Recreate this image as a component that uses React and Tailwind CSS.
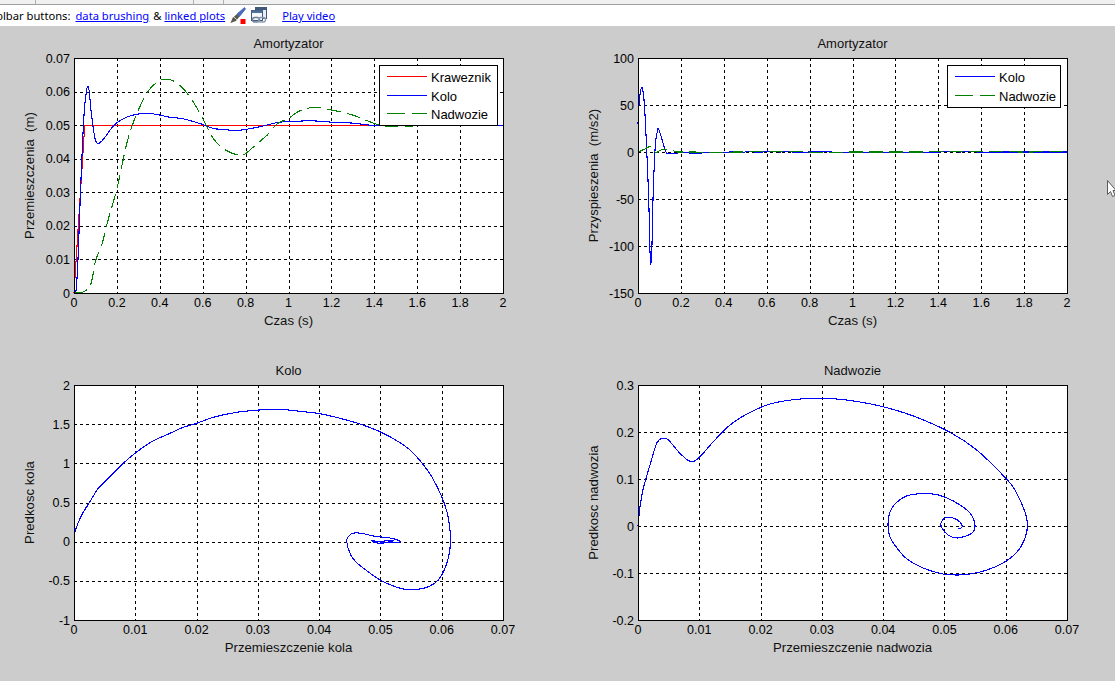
const toCurve = (pts) => {
  // catmull-rom through the points so the traces stay smooth
  let d = `M${pts[0][0]} ${pts[0][1]}`;
  for (let i = 0; i < pts.length - 1; i++) {
    const p0 = pts[i - 1] || pts[i];
    const p1 = pts[i];
    const p2 = pts[i + 1];
    const p3 = pts[i + 2] || p2;
    const c1 = [p1[0] + (p2[0] - p0[0]) / 6, p1[1] + (p2[1] - p0[1]) / 6];
    const c2 = [p2[0] - (p3[0] - p1[0]) / 6, p2[1] - (p3[1] - p1[1]) / 6];
    d += `C${c1[0]} ${c1[1]} ${c2[0]} ${c2[1]} ${p2[0]} ${p2[1]}`;
  }
  return d;
};

const toLine = (pts) => 'M' + pts.map((p) => `${p[0]} ${p[1]}`).join('L');

const range = (from, step, n) => Array.from({ length: n }, (_, i) => +(from + step * i).toFixed(4));

const BLUE = '#0000ff';
const GREEN = '#007f00';
const RED = '#ff0000';

const kolo1 = [[0,0],[0.01,0.001],[0.02,0.012],[0.03,0.03],[0.04,0.045],[0.05,0.056],[0.06,0.0608],[0.065,0.0616],[0.07,0.0605],[0.08,0.054],[0.09,0.049],[0.1,0.0455],[0.11,0.0445],[0.12,0.0447],[0.14,0.046],[0.17,0.0487],[0.2,0.0507],[0.25,0.0525],[0.3,0.0533],[0.35,0.0535],[0.4,0.053],[0.45,0.0523],[0.5,0.052],[0.55,0.0512],[0.6,0.0502],[0.65,0.049],[0.7,0.0487],[0.76,0.0484],[0.85,0.0493],[0.95,0.0508],[1,0.051],[1.1,0.0513],[1.2,0.0509],[1.3,0.0506],[1.4,0.0499],[1.5,0.05],[1.7,0.0501],[2,0.05]];
const nadwozie1 = [[0,0],[0.05,0.0005],[0.08,0.003],[0.1,0.0095],[0.13,0.0145],[0.16,0.022],[0.2,0.031],[0.25,0.0455],[0.3,0.0545],[0.35,0.0605],[0.4,0.0633],[0.43,0.0637],[0.46,0.0633],[0.5,0.0615],[0.55,0.0575],[0.6,0.052],[0.65,0.046],[0.7,0.0428],[0.77,0.041],[0.8,0.0415],[0.85,0.0443],[0.9,0.047],[0.95,0.0505],[1,0.052],[1.05,0.0542],[1.12,0.0553],[1.2,0.0545],[1.3,0.053],[1.4,0.0505],[1.45,0.0497],[1.5,0.0497],[1.6,0.0498],[1.8,0.0505],[1.95,0.0515],[2,0.051]];

const kolo2 = [[0,30],[0.005,50],[0.012,65],[0.02,68],[0.03,50],[0.04,5],[0.05,-50],[0.055,-100],[0.06,-120],[0.065,-100],[0.07,-50],[0.08,5],[0.09,22],[0.095,25],[0.11,15],[0.13,0],[0.15,-2],[0.18,-1.5],[0.2,-0.5],[0.28,-1.5],[0.32,-0.5],[0.4,-1],[0.44,0.5],[0.48,-1],[0.52,1],[0.56,-1],[0.6,1],[0.66,0],[0.7,0.5],[0.75,-0.5],[0.85,0.5],[0.95,-0.5],[1.1,-0.5],[1.4,0],[1.47,1],[1.5,0],[1.56,1],[1.6,-0.5],[1.7,0],[2,0]];
const nadwozie2 = [[0,0],[0.03,3],[0.05,5.5],[0.06,6],[0.07,3],[0.08,0],[0.09,0],[0.11,2.5],[0.13,3],[0.15,2],[0.18,0.5],[0.2,0],[0.5,0],[0.7,1],[0.85,-0.5],[1,0],[1.3,0],[1.55,0.5],[1.8,0],[2,0.5]];

const kolo3 = [[74.3,541.7],[75,531.7],[81.7,515],[90,501.7],[98.3,488.3],[113.3,473.3],[123.3,463.3],[135.7,452.7],[151.7,441.7],[170,433.3],[183.3,427.3],[196.7,423.3],[213.3,417.3],[236.7,412.3],[263.3,409.7],[280,409.3],[300,411.3],[320,413.7],[340,418.3],[360,424],[380,431.7],[396.7,440.7],[410,450],[421.7,462.7],[431.7,476.7],[441.7,496.7],[447.3,513.3],[450,530],[450.5,541.7],[449,555],[445,568.3],[438.3,580],[430,586],[420,589],[405,589.3],[393.3,586],[380,580],[366.7,570.7],[356.7,562.7],[350.7,555],[346.7,541.7],[348.3,536.7],[352.7,533.3],[361.7,533.3],[373.3,536],[391.7,538.3],[400,541.7],[386.7,542.7],[371.7,540.7],[380,543.3],[393.3,540.7],[373.3,542],[385,541.5]];

const nadwozie4 = [[638,526],[640,507],[643.3,488.3],[650,465],[656.7,443.3],[662.3,438.3],[668.3,440],[680,453.3],[690,461.3],[698.3,458.3],[713.3,441.7],[730,425],[748.3,413.3],[770,404],[796.7,399.3],[821.7,398.3],[846.7,400],[880,406],[913.3,416],[950,432.3],[976.7,450],[1005,477.3],[1015,490],[1025,512],[1027.5,525],[1025,538],[1017,552],[1003,563],[987,570],[970,574],[958,575],[943,574],[923,568],[907,559],[897,548],[890,537],[888,525],[890,512],[897,502],[910,495],[933,494],[947,498],[960,505],[970,513],[975,525],[972,533],[958,538],[948,535],[942,528],[941,523],[945,518],[953,518],[960,522],[962,527],[958,529]];

const PLOTS = [
  {
    origin: [0, 26], left: 74, top: 58, title: 'Amortyzator', xLabel: 'Czas (s)', yLabel: 'Przemieszczenia  (m)',
    xs: range(0, 0.2, 11), ys: range(0, 0.01, 8),
    traces: (sx, sy) => {
      const flat = Math.round(sy(0.05)) + 0.5;
      return [
        { d: toLine([[sx(0), sy(0)], [sx(0.05), flat], [sx(2), flat]]), color: RED },
        { d: toCurve(kolo1.map(([x, y]) => [sx(x), sy(y)])), color: BLUE },
        { d: toCurve(nadwozie1.map(([x, y]) => [sx(x), sy(y)])), color: GREEN, dash: '14 6' },
      ];
    },
    legend: { x: 379, y: 65, w: 118, h: 60, rows: [['Kraweznik', RED], ['Kolo', BLUE], ['Nadwozie', GREEN, '18 7']] },
  },
  {
    origin: [564, 26], left: 638, top: 58, title: 'Amortyzator', xLabel: 'Czas (s)', yLabel: 'Przyspieszenia  (m/s2)',
    xs: range(0, 0.2, 11), ys: range(-150, 50, 6),
    traces: (sx, sy) => [
      { d: toCurve(kolo2.map(([x, y]) => [sx(x), sy(y)])), color: BLUE },
      { d: toCurve(nadwozie2.map(([x, y]) => [sx(x), sy(y)])), color: GREEN, dash: '14 6' },
    ],
    legend: { x: 947, y: 65, w: 113, h: 42, rows: [['Kolo', BLUE], ['Nadwozie', GREEN, '18 7']] },
  },
  {
    origin: [0, 353], left: 74, top: 385, title: 'Kolo', xLabel: 'Przemieszczenie kola', yLabel: 'Predkosc kola',
    xs: range(0, 0.01, 8), ys: range(-1, 0.5, 7),
    traces: () => [{ d: toCurve(kolo3), color: BLUE }],
  },
  {
    origin: [564, 353], left: 638, top: 385, title: 'Nadwozie', xLabel: 'Przemieszczenie nadwozia', yLabel: 'Predkosc nadwozia',
    xs: range(0, 0.01, 8), ys: range(-0.2, 0.1, 6),
    traces: () => [{ d: toCurve(nadwozie4), color: BLUE }],
  },
];

const W = 429;
const H = 235;

function Legend({ x, y, w, h, rows }) {
  return (
    <g>
      <rect x={x + 0.5} y={y + 0.5} width={w} height={h} fill="#fff" stroke="#000" shapeRendering="crispEdges" />
      {rows.map(([name, color, dash], i) => {
        const rowY = y + 11.5 + Math.floor(i * 18.5 + 0.5);
        return (
          <g key={name}>
            <path d={`M${x + 8} ${rowY}H${x + 48}`} stroke={color} strokeDasharray={dash} shapeRendering="crispEdges" />
            <text x={x + 52} y={rowY + 5.5} fontSize="13" fill="#000">{name}</text>
          </g>
        );
      })}
    </g>
  );
}

function Plot({ plot }) {
  const { origin, left, top, xs, ys } = plot;
  const right = left + W;
  const bottom = top + H;
  const x0 = xs[0];
  const x1 = xs[xs.length - 1];
  const y0 = ys[0];
  const y1 = ys[ys.length - 1];
  const sx = (v) => left + ((v - x0) / (x1 - x0)) * W;
  const sy = (v) => bottom - ((v - y0) / (y1 - y0)) * H;
  const midX = left + W / 2;
  const midY = top + H / 2;

  return (
    <svg
      width="551"
      height="327"
      viewBox={`${origin[0]} ${origin[1]} 551 327`}
      className="block overflow-hidden font-['Liberation_Sans',Arial,sans-serif]"
    >
      <rect x={left} y={top} width={W} height={H} fill="#fff" />
      <g stroke="#000" strokeDasharray="3 3" shapeRendering="crispEdges">
        {xs.slice(1, -1).map((v) => (
          <path key={v} d={`M${Math.round(sx(v)) + 0.5} ${top}V${bottom}`} />
        ))}
        {ys.map((v) => (
          <path key={v} d={`M${left} ${Math.round(sy(v)) + 0.5}H${right}`} />
        ))}
      </g>
      <g fill="none" shapeRendering="crispEdges">
        {plot.traces(sx, sy).map((t) => (
          <path key={t.color} d={t.d} stroke={t.color} strokeDasharray={t.dash} strokeWidth="1.1" />
        ))}
      </g>
      <rect x={left + 0.5} y={top + 0.5} width={W} height={H} fill="none" stroke="#000" shapeRendering="crispEdges" />
      {plot.legend && <Legend {...plot.legend} />}

      <g fontSize="12.5" fill="#000">
        {xs.map((v) => (
          <text key={v} x={sx(v)} y={bottom + 14} textAnchor="middle">{String(v)}</text>
        ))}
        {ys.map((v) => (
          <text key={v} x={left - 4} y={sy(v) + 4.5} textAnchor="end">{String(v)}</text>
        ))}
      </g>
      <g fontSize="13.2" fill="#111">
        <text x={midX} y={top - 10} textAnchor="middle" fontSize="13">{plot.title}</text>
        <text x={midX} y={bottom + 32} textAnchor="middle">{plot.xLabel}</text>
        <text
          x={left - 40}
          y={midY}
          textAnchor="middle"
          xmlSpace="preserve"
          transform={`rotate(-90 ${left - 40} ${midY})`}
        >
          {plot.yLabel}
        </text>
      </g>
    </svg>
  );
}

function BrushIcon() {
  return (
    <svg width="16" height="18" viewBox="0 0 16 18" className="block">
      <path d="M14.5 0.5 L7 7 L9.5 9.5 L15.5 2 Z" fill="#4a6cc4" stroke="#2b4a92" strokeWidth="0.6" />
      <path d="M7 7 L9.5 9.5 L6 14 L0.5 16 L2.5 11 Z" fill="#5a5a52" />
      <path d="M4 10 L7 13" stroke="#d0d0c8" strokeWidth="1" />
      <rect x="10.5" y="12" width="5" height="5" fill="#ff0000" />
    </svg>
  );
}

function LinkIcon() {
  return (
    <svg width="17" height="17" viewBox="0 0 17 17" className="block" fill="none">
      <rect x="4.5" y="0.5" width="11" height="11" fill="#e8eef6" stroke="#40587a" />
      <rect x="4.5" y="0.5" width="11" height="2.5" fill="#40587a" />
      <rect x="0.5" y="3.5" width="11" height="10" fill="#f4f7fb" stroke="#40587a" />
      <rect x="0.5" y="3.5" width="11" height="2.5" fill="#4f6f9f" />
      <rect x="1.5" y="10.5" width="7" height="4.5" rx="2.2" fill="none" stroke="#6c7f9a" strokeWidth="1.4" />
      <rect x="7.5" y="10.5" width="7" height="4.5" rx="2.2" fill="none" stroke="#8c9cb2" strokeWidth="1.4" />
    </svg>
  );
}

function Cursor() {
  return (
    <svg width="9" height="18" viewBox="0 0 9 18" className="absolute left-[1107px] top-[180px]">
      <path d="M0.5 0.5 L0.5 14.5 L3.5 11.5 L5.5 16.5 L8 15.5 L6 10.5 L9 10.5 Z" fill="#fff" stroke="#5a5a5a" strokeWidth="1" />
    </svg>
  );
}

export default function App() {
  return (
    <div className="relative w-[1115px] h-[681px] overflow-hidden bg-[#cccccc]">
      <div className="flex h-[4px] bg-[#f0f0f0]">
        <div className="ml-[35px] w-[158px] h-full border-l border-[#b0b0b0]" />
        <div className="w-[31px] h-full border-x border-[#b0b0b0]" />
      </div>
      <div className="h-[1px] bg-[#a0a0a0]" />
      <div className="flex items-center h-[21px] pt-[2px] bg-white font-['Noto_Sans',Tahoma,sans-serif] text-[11.2px] text-black whitespace-nowrap overflow-hidden">
        <span className="-ml-[16px]">Toolbar buttons:</span>
        <a href="#" className="ml-[5px] text-[#0000ff] underline">data brushing</a>
        <span className="ml-[4px]">&amp;</span>
        <a href="#" className="ml-[3px] text-[#0000ff] underline">linked plots</a>
        <span className="ml-[5px] -mt-[2px]"><BrushIcon /></span>
        <span className="ml-[5px] -mt-[2px]"><LinkIcon /></span>
        <a href="#" className="ml-[14px] text-[#0000ff] underline">Play video</a>
      </div>
      <div className="grid grid-cols-[564px_551px]">
        {PLOTS.map((p) => (
          <Plot key={p.origin.join()} plot={p} />
        ))}
      </div>
      <Cursor />
    </div>
  );
}
